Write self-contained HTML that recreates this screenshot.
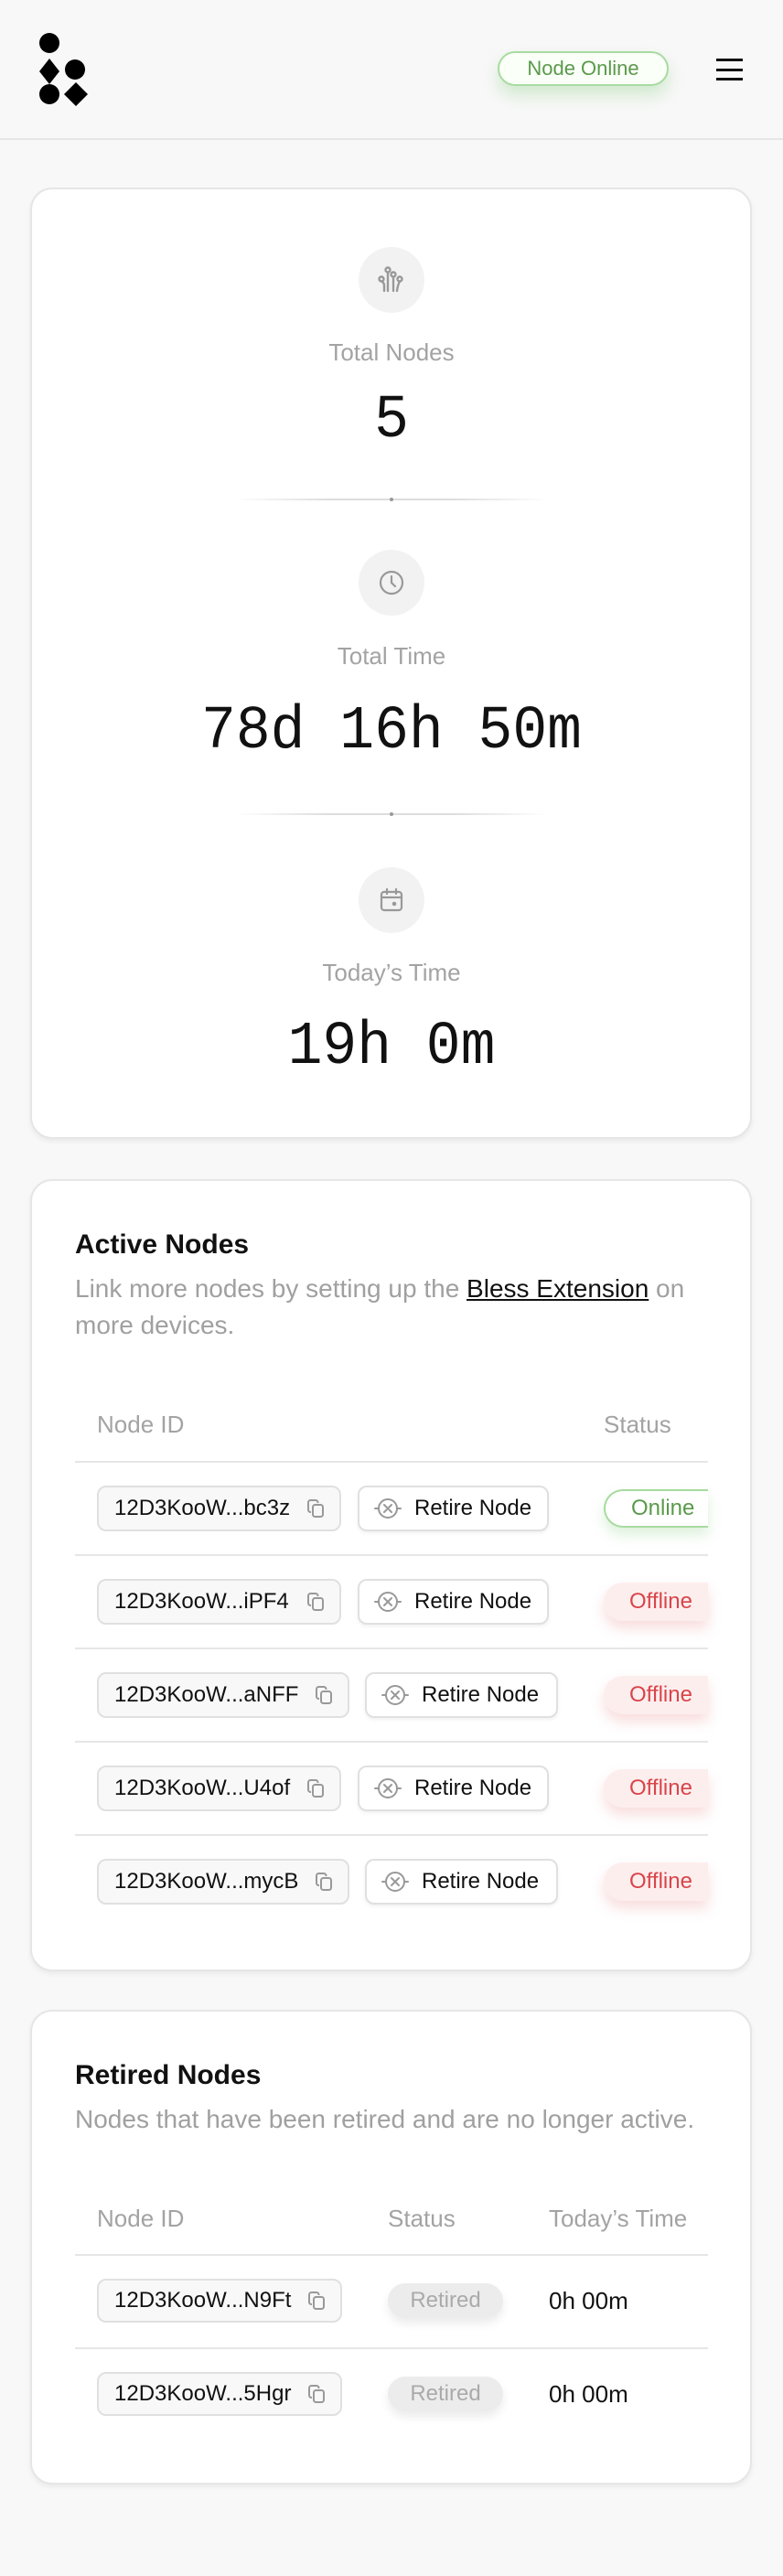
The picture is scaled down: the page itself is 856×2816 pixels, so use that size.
<!DOCTYPE html>
<html><head><meta charset="utf-8"><style>
*{box-sizing:border-box;margin:0;padding:0}
body{width:856px;height:2816px;background:#f8f8f8;font-family:"Liberation Sans",sans-serif;position:relative;overflow:hidden}
.a{position:absolute}
.card{position:absolute;left:33px;width:789px;background:#fff;border:2px solid #e6e6e6;border-radius:24px;box-shadow:0 3px 6px rgba(0,0,0,.06)}
.c{position:absolute;left:0;width:856px;text-align:center}
.ic{position:absolute;left:392px;width:72px;height:72px;border-radius:50%;background:#f2f2f2;display:flex;align-items:center;justify-content:center}
.lbl{color:#a3a3a3;font-size:26px}
.val{font-family:"Liberation Mono",monospace;color:#111;font-size:63px;line-height:72px;height:72px;transform:scaleY(1.06)}
.div{position:absolute;left:256px;width:344px;height:2px;background:linear-gradient(90deg,transparent,#ddd 30%,#ddd 70%,transparent)}
.dot{position:absolute;left:426px;width:4px;height:4px;border-radius:50%;background:#999}
.h{font-weight:bold;font-size:30px;color:#111}
.sub{color:#a0a0a0;font-size:28px;line-height:40px}
.th{color:#a3a3a3;font-size:26px;line-height:30px}
.line{position:absolute;left:82px;width:692px;height:2px;background:#e6e6e6}
.chip{position:absolute;left:106px;height:50px;border:2px solid #e0e0e0;border-radius:10px;background:#f8f8f8;font-size:24px;color:#111;display:flex;align-items:center;padding-left:17px}
.chip svg{position:absolute;right:14px}
.ret{position:absolute;height:50px;border:2px solid #e0e0e0;border-radius:10px;background:#fff;font-size:24px;color:#111;display:flex;align-items:center;padding-left:16px;box-shadow:0 2px 4px rgba(0,0,0,.06)}
.ret svg{margin-right:14px}
.st{position:absolute;left:660px;width:114px;height:42px;border-radius:21px 0 0 21px;font-size:24px;display:flex;align-items:center;padding-left:28px;overflow:hidden}
.on{color:#5a9a4a;border:2px solid #a8dba0;border-right:none;background:#fff;box-shadow:0 8px 14px rgba(120,200,110,.25)}
.off{color:#d9454a;background:#fdeeee;box-shadow:0 8px 14px rgba(230,120,120,.25)}
.rt{position:absolute;left:424px;width:126px;height:38px;border-radius:19px;background:#ececec;color:#aaa;font-size:24px;display:flex;align-items:center;justify-content:center;box-shadow:0 6px 10px rgba(0,0,0,.08)}
.tm{position:absolute;left:600px;font-size:26px;line-height:30px;color:#111}
</style></head><body>
<!-- header -->
<svg class="a" style="left:41px;top:36px" width="56" height="80" viewBox="0 0 56 80">
<ellipse cx="13" cy="11" rx="11" ry="11"/>
<polygon points="13,28 24,42 13,56 2,42"/>
<ellipse cx="41" cy="40" rx="11" ry="11"/>
<ellipse cx="13" cy="67" rx="11" ry="11"/>
<polygon points="42,54 55,67 42,80 29,67"/>
</svg>
<div class="a" style="left:544px;top:56px;width:187px;height:38px;border:2px solid #a8dba0;border-radius:19px;background:#fafff8;color:#5a9a4a;font-size:22px;display:flex;align-items:center;justify-content:center;box-shadow:0 10px 18px rgba(120,200,110,.3)">Node Online</div>
<div class="a" style="left:783px;top:64px;width:29px;height:3px;background:#111"></div>
<div class="a" style="left:783px;top:75px;width:29px;height:3px;background:#111"></div>
<div class="a" style="left:783px;top:85px;width:29px;height:3px;background:#111"></div>
<div class="a" style="left:0;top:151px;width:856px;height:2px;background:#e6e6e6"></div>

<!-- stats card -->
<div class="card" style="top:205px;height:1040px"></div>
<div class="ic" style="top:270px"><svg width="32" height="32" viewBox="0 0 32 32" fill="none" stroke="#999" stroke-width="2.4" stroke-linecap="round"><circle cx="12" cy="5" r="2.5"/><circle cx="18" cy="10" r="2.5"/><circle cx="5" cy="15" r="2.5"/><circle cx="25" cy="15" r="2.5"/><path d="M12 7.5V28M18 12.5V28M5 17.5Q8 19 8 22V28M25 17.5Q23 21 22 28"/></svg></div>
<div class="c lbl" style="top:370px">Total Nodes</div>
<div class="c val" style="top:424px">5</div>
<div class="div" style="top:545px"></div><div class="dot" style="top:544px"></div>
<div class="ic" style="top:601px"><svg width="32" height="32" viewBox="0 0 32 32" fill="none" stroke="#999" stroke-width="2.2" stroke-linecap="round"><circle cx="16" cy="16" r="12"/><path d="M16 9V16L20 20"/></svg></div>
<div class="c lbl" style="top:702px">Total Time</div>
<div class="c val" style="top:764px">78d 16h 50m</div>
<div class="div" style="top:889px"></div><div class="dot" style="top:888px"></div>
<div class="ic" style="top:948px"><svg width="32" height="32" viewBox="0 0 32 32" fill="none" stroke="#999" stroke-width="2.2" stroke-linecap="round"><rect x="5" y="7" width="22" height="20" rx="3"/><path d="M5 13H27M11 4V9M21 4V9"/><circle cx="19" cy="20" r="1.2" fill="#777"/></svg></div>
<div class="c lbl" style="top:1048px">Today’s Time</div>
<div class="c val" style="top:1109px">19h 0m</div>

<!-- active nodes -->
<div class="card" style="top:1289px;height:866px"></div>
<div class="a h" style="left:82px;top:1344px">Active Nodes</div>
<div class="a sub" style="left:82px;top:1389px;width:700px">Link more nodes by setting up the <span style="color:#111;text-decoration:underline">Bless Extension</span> on<br>more devices.</div>
<div class="a th" style="left:106px;top:1542px">Node ID</div>
<div class="a th" style="left:660px;top:1542px">Status</div>
<div class="line" style="top:1597px"></div>

<svg width="0" height="0" style="position:absolute"><defs>
<symbol id="cp" viewBox="0 0 24 24"><g fill="none" stroke="#999" stroke-width="2"><rect x="9" y="8" width="11" height="13" rx="2.5"/><path d="M7 16H6.5A2.5 2.5 0 0 1 4 13.5V5.5A2.5 2.5 0 0 1 6.5 3H12A2.5 2.5 0 0 1 14.5 5.5V6"/></g></symbol>
<symbol id="rx" viewBox="0 0 30 30"><g fill="none" stroke="#999" stroke-width="2" stroke-linecap="round"><circle cx="15" cy="15" r="10"/><path d="M11 11L19 19M19 11L11 19M1 15H5M25 15H29"/></g></symbol>
</defs></svg>

<div class="chip" style="top:1624px;width:267px">12D3KooW...bc3z<svg width="24" height="24"><use href="#cp"/></svg></div>
<div class="ret" style="top:1624px;left:391px;width:209px"><svg width="30" height="30"><use href="#rx"/></svg>Retire Node</div>
<div class="st on" style="top:1628px">Online</div>
<div class="line" style="top:1699px"></div>

<div class="chip" style="top:1726px;width:267px">12D3KooW...iPF4<svg width="24" height="24"><use href="#cp"/></svg></div>
<div class="ret" style="top:1726px;left:391px;width:209px"><svg width="30" height="30"><use href="#rx"/></svg>Retire Node</div>
<div class="st off" style="top:1730px">Offline</div>
<div class="line" style="top:1801px"></div>

<div class="chip" style="top:1828px;width:276px">12D3KooW...aNFF<svg width="24" height="24"><use href="#cp"/></svg></div>
<div class="ret" style="top:1828px;left:399px;width:211px"><svg width="30" height="30"><use href="#rx"/></svg>Retire Node</div>
<div class="st off" style="top:1832px">Offline</div>
<div class="line" style="top:1903px"></div>

<div class="chip" style="top:1930px;width:267px">12D3KooW...U4of<svg width="24" height="24"><use href="#cp"/></svg></div>
<div class="ret" style="top:1930px;left:391px;width:209px"><svg width="30" height="30"><use href="#rx"/></svg>Retire Node</div>
<div class="st off" style="top:1934px">Offline</div>
<div class="line" style="top:2005px"></div>

<div class="chip" style="top:2032px;width:276px">12D3KooW...mycB<svg width="24" height="24"><use href="#cp"/></svg></div>
<div class="ret" style="top:2032px;left:399px;width:211px"><svg width="30" height="30"><use href="#rx"/></svg>Retire Node</div>
<div class="st off" style="top:2036px">Offline</div>

<!-- retired nodes -->
<div class="card" style="top:2197px;height:519px"></div>
<div class="a h" style="left:82px;top:2252px">Retired Nodes</div>
<div class="a sub" style="left:82px;top:2297px">Nodes that have been retired and are no longer active.</div>
<div class="a th" style="left:106px;top:2410px">Node ID</div>
<div class="a th" style="left:424px;top:2410px">Status</div>
<div class="a th" style="left:600px;top:2410px">Today’s Time</div>
<div class="line" style="top:2464px"></div>
<div class="chip" style="top:2491px;width:268px;height:48px">12D3KooW...N9Ft<svg width="24" height="24"><use href="#cp"/></svg></div>
<div class="rt" style="top:2496px">Retired</div>
<div class="tm" style="top:2500px">0h 00m</div>
<div class="line" style="top:2566px"></div>
<div class="chip" style="top:2593px;width:268px;height:48px">12D3KooW...5Hgr<svg width="24" height="24"><use href="#cp"/></svg></div>
<div class="rt" style="top:2598px">Retired</div>
<div class="tm" style="top:2602px">0h 00m</div>
</body></html>
